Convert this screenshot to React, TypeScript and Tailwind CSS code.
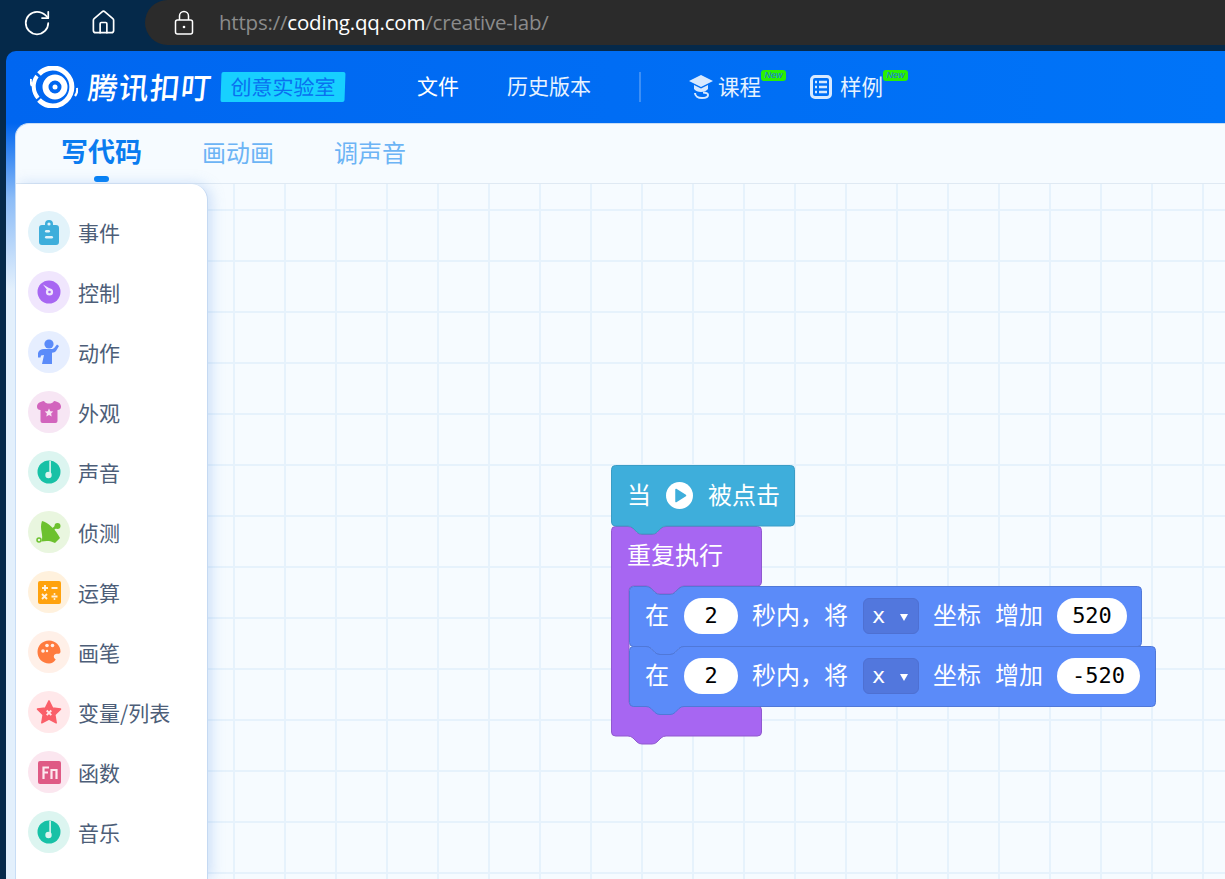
import React from "react";
import { RotateCw, Home } from "lucide-react";

const CJK = { fontFamily: '"Noto Sans CJK SC", sans-serif' } as const;

function topEdge(notch: boolean) {
  return notch ? "H17 q3 0 5 2 l4 4 q2 2 5 2 h10 q3 0 5 -2 l4 -4 q2 -2 5 -2" : "";
}
function bottomNotch(off: number) {
  // travelling right to left along a bottom edge
  return `H${off + 55} q-3 0 -5 2 l-4 4 q-2 2 -5 2 h-10 q-3 0 -5 -2 l-4 -4 q-2 -2 -5 -2`;
}
function stack(w: number, h: number, notch: boolean) {
  return `M4.5 .5 ${topEdge(notch)} H${w - 4.5} q4 0 4 4 V${h - 4.5} q0 4 -4 4 ${bottomNotch(0)} H4.5 q-4 0 -4 -4 V4.5 q0 -4 4 -4 Z`;
}

function BlockShape({ d, w, h, fill, stroke }: { d: string; w: number; h: number; fill: string; stroke: string }) {
  return (
    <svg width={w} height={h} className="absolute left-0 top-0 overflow-visible" viewBox={`0 0 ${w} ${h}`}>
      <path d={d} fill={fill} stroke={stroke} strokeWidth="1" />
    </svg>
  );
}

function Pill({ w, children }: { w: string; children: React.ReactNode }) {
  return (
    <span className={`${w} h-[36px] pb-[1px] rounded-[18px] bg-white flex items-center justify-center text-black text-[22px] font-['DejaVu_Sans_Mono',monospace]`}>
      {children}
    </span>
  );
}

function MoveRow({ w, value, pill, top }: { w: number; value: string; pill: string; top: number }) {
  return (
    <div className="absolute left-[18px]" style={{ top, width: w, height: 61 }}>
      <BlockShape d={stack(w, 61, true)} w={w} h={61} fill="#5b8bf9" stroke="#5078d8" />
      <div className="relative h-[60px] pl-[16px] flex items-center text-white text-[24px] leading-none">
        <span className="mr-[15px] pb-[4px]">在</span>
        <Pill w="w-[54px]">2</Pill>
        <span className="ml-[14px] mr-[15px] pb-[4px] whitespace-nowrap">秒内，将</span>
        <span className="w-[56px] h-[36px] pb-[1px] rounded-[6px] bg-[#5277dd] border border-[#4e70d2] flex items-center pl-[8px] gap-[14px] text-[22px] font-['DejaVu_Sans_Mono',monospace]">
          x
          <svg width="8" height="7" viewBox="0 0 8 7" className="mt-[3px] ml-[1px]"><path d="M0 0h8L4 7Z" fill="#fff" /></svg>
        </span>
        <span className="ml-[14px] pb-[4px] whitespace-nowrap">坐标</span>
        <span className="ml-[14px] mr-[14px] pb-[4px] whitespace-nowrap">增加</span>
        <Pill w={pill}>{value}</Pill>
      </div>
    </div>
  );
}

const icons: Record<string, React.ReactNode> = {
  event: (
    <svg width="20" height="26" viewBox="0 0 20 26">
      <path d="M6 6V5a4 4 0 0 1 8 0v1h3a3 3 0 0 1 3 3v14a3 3 0 0 1-3 3H3a3 3 0 0 1-3-3V9a3 3 0 0 1 3-3Z" fill="#3eaedb" />
      <circle cx="10" cy="5" r="1.6" fill="#e2f3fa" />
      <rect x="6" y="11" width="5" height="2.4" rx="1.2" fill="#e2f3fa" />
      <rect x="6" y="17" width="8" height="2.4" rx="1.2" fill="#e2f3fa" />
    </svg>
  ),
  control: (
    <svg width="24" height="24" viewBox="0 0 24 24">
      <circle cx="12" cy="12" r="11.5" fill="#a766f2" />
      <path d="M6 4.5l8.5 5-2.5 3Z" fill="#f0e6fd" />
      <circle cx="12.5" cy="12" r="3.6" fill="#f0e6fd" />
      <circle cx="12.5" cy="12" r="1.3" fill="#a766f2" />
    </svg>
  ),
  motion: (
    <svg width="24" height="26" viewBox="0 0 24 26">
      <circle cx="12" cy="5" r="4.6" fill="#5b8bf9" />
      <path d="M1 14c1-3 3-4 6-4h7c2 0 3-.5 4-2l2-2.500 2 1.500-3 5c-1 1.200-2 1.600-4 1.800L15 25H5l2-9-3 .5-.5 2H1Z" fill="#5b8bf9" />
    </svg>
  ),
  look: (
    <svg width="24" height="22" viewBox="0 0 24 22">
      <path d="M7 0c1 2 3 2.500 5 2.500S16 2 17 0c4 .5 7 2.500 7 5.500 0 2-1 3.500-3.500 3.500V20a2 2 0 0 1-2 2h-13a2 2 0 0 1-2-2V9C1 9 0 7.500 0 5.500 0 2.500 3 .5 7 0Z" fill="#d264bd" />
      <path d="M12 7.500l1.300 2.800 3 .3-2.200 2 .6 3-2.700-1.500-2.700 1.500.6-3-2.200-2 3-.3Z" fill="#f7e6f4" />
    </svg>
  ),
  sound: (
    <svg width="24" height="24" viewBox="0 0 24 24">
      <circle cx="12" cy="12" r="11.500" fill="#17c1a6" />
      <rect x="12.300" y="1" width="1.600" height="14" fill="#dcf5f0" />
      <circle cx="11.500" cy="15" r="3.200" fill="#dcf5f0" />
    </svg>
  ),
  sense: (
    <svg width="26" height="23" viewBox="0 0 26 23">
      <path d="M6 0C12 1 20 9 24 17L19 22C15 19.500 10 19.500 5.500 20.500 8 14 3 8 6 0Z" fill="#6cc12e" />
      <path d="M12 12 21 5" stroke="#6cc12e" strokeWidth="2.500" />
      <circle cx="21.500" cy="5" r="3" fill="#6cc12e" />
      <circle cx="3" cy="19" r="2" fill="none" stroke="#6cc12e" strokeWidth="1.500" />
    </svg>
  ),
  math: (
    <svg width="23" height="23" viewBox="0 0 23 23">
      <rect width="23" height="23" rx="2" fill="#ffa20d" />
      <path d="M4 7h6M7 4v6M13.500 7h6M4 13l5 5M9 13l-5 5M13.500 15.500h6" stroke="#fff1dd" strokeWidth="1.900" />
      <circle cx="16.500" cy="13" r="1" fill="#fff1dd" />
      <circle cx="16.500" cy="18" r="1" fill="#fff1dd" />
    </svg>
  ),
  pen: (
    <svg width="24" height="24" viewBox="0 0 24 24">
      <path d="M12 .5C18.500.5 23.500 5.500 23.500 11.500c0 1.500-1 2.300-2.500 2.300-2 0-4.200.5-4.200 2.700 0 1.300 1 2.200 2 3C16.800 22 15 23.500 12 23.500 5.500 23.500.5 18.500.5 12S5.500.5 12 .5Z" fill="#ff7b3e" />
      <circle cx="6" cy="11" r="1.800" fill="#fff0e8" />
      <circle cx="10" cy="5.500" r="1.800" fill="#fff0e8" />
      <circle cx="15.500" cy="5.500" r="1.800" fill="#fff0e8" />
      <circle cx="10" cy="11" r="1.200" fill="#fff0e8" />
    </svg>
  ),
  vars: (
    <svg width="26" height="24" viewBox="0 0 26 24">
      <path d="M13 .8 16.600 8 24.500 9.100 18.800 14.700 20.200 22.800 13 19 5.800 22.800 7.200 14.700 1.500 9.100 9.400 8Z" fill="#fa5f69" stroke="#fa5f69" strokeWidth="1.500" strokeLinejoin="round" />
      <path d="M10.700 10.500l4.600 4.600M15.300 10.500l-4.600 4.600" stroke="#ffe8ea" strokeWidth="1.900" />
    </svg>
  ),
  fn: (
    <svg width="23" height="23" viewBox="0 0 23 23">
      <rect width="23" height="23" rx="2" fill="#df5a85" />
      <path d="M5.500 18V6.500H11M5.500 11.500H10M13.500 18V9h5v9" fill="none" stroke="#fde8ef" strokeWidth="2.200" />
    </svg>
  ),
};

const items: [string, string, string][] = [
  ["事件", "bg-[#e2f3fa]", "event"],
  ["控制", "bg-[#f0e6fd]", "control"],
  ["动作", "bg-[#e6eeff]", "motion"],
  ["外观", "bg-[#f7e6f4]", "look"],
  ["声音", "bg-[#dcf5f0]", "sound"],
  ["侦测", "bg-[#e9f6df]", "sense"],
  ["运算", "bg-[#fff1dd]", "math"],
  ["画笔", "bg-[#fff0e8]", "pen"],
  ["变量/列表", "bg-[#ffe8ea]", "vars"],
  ["函数", "bg-[#fbe6ef]", "fn"],
  ["音乐", "bg-[#dcf5f0]", "sound"],
];

function NewBadge() {
  return (
    <span className="absolute left-full top-[0px] w-[25px] h-[11px] rounded-[3px] bg-[#2bf000] text-[#1a6ee8] text-[9px] leading-[11px] italic text-center font-['Liberation_Sans',sans-serif]">
      New
    </span>
  );
}

export default function App() {
  const cShape = `M4.5 .5 ${topEdge(true)} H146.500 q4 0 4 4 V56 q0 4 -4 4 ${bottomNotch(18)} H22 q-4 0 -4 4 V176 q0 4 4 4 H146.500 q4 0 4 4 V206 q0 4 -4 4 ${bottomNotch(0)} H4.500 q-4 0 -4 -4 V4.500 q0 -4 4 -4 Z`;
  const hat = `M4.500 .5 H179.500 q4 0 4 4 V57 q0 4 -4 4 ${bottomNotch(0)} H4.500 q-4 0 -4 -4 V4.500 q0 -4 4 -4 Z`;

  return (
    <div className="w-[1225px] h-[879px] overflow-hidden bg-[#05294a] flex flex-col" style={CJK}>
      {/* browser chrome */}
      <div className="h-[51px] shrink-0 flex items-start text-white">
        <div className="w-[145px] h-[45px] flex items-center pl-[22px] gap-[38px]">
          <RotateCw size={30} strokeWidth={1.4} />
          <Home size={27} strokeWidth={1.5} />
        </div>
        <div className="flex-1 h-[45px] bg-[#2b2b2b] rounded-l-[24px] flex items-center pl-[28px] gap-[24px]">
          <svg width="22" height="26" viewBox="0 0 22 26" fill="none" stroke="#fff" strokeWidth="1.500">
            <rect x="2.500" y="10" width="17" height="14" rx="2" />
            <path d="M6.500 10V6a4.500 4.500 0 0 1 9 0v4" />
            <circle cx="11" cy="17" r="1.300" fill="#fff" stroke="none" />
          </svg>
          <span className="text-[20.500px] text-[#8b8b8b] font-['Open_Sans',sans-serif] tracking-[-0.2px]">
            https://<span className="text-white">coding.qq.com</span>/creative-lab/
          </span>
        </div>
      </div>

      {/* page */}
      <div className="flex-1 min-h-0 ml-[6px] rounded-tl-[10px] overflow-hidden flex flex-col">
        <header className="h-[72px] shrink-0 bg-gradient-to-r from-[#0066f0] to-[#0074f8] flex items-center text-white">
          <svg width="48" height="42" viewBox="0 0 48 42" className="ml-[24px]">
            <path d="M9 8A19 19 0 1 1 9 34" fill="none" stroke="#fff" strokeWidth="5" />
            <path d="M7 10a18 18 0 0 0 1 22" fill="none" stroke="#fff" strokeWidth="4" />
            <circle cx="25" cy="21" r="9.500" fill="none" stroke="#fff" strokeWidth="6" />
            <circle cx="25" cy="21" r="2.500" fill="#fff" />
            <path d="M1 13q-1 3 1 7M47 22q1 4-2 8" fill="none" stroke="#fff" strokeWidth="2.200" />
          </svg>
          <span className="ml-[10px] w-[125px] pb-[2px] text-[30px] leading-none font-medium -skew-x-6 tracking-[1px] whitespace-nowrap">腾讯扣叮</span>
          <span className="ml-[8px] w-[124px] h-[30px] bg-[#17d0ff] rounded-[2px] -skew-x-2 text-[#0a6ff0] text-[21px] leading-[28px] text-center whitespace-nowrap">创意实验室</span>
          <span className="ml-[72px] pb-[2px] text-[21px]">文件</span>
          <span className="ml-[48px] pb-[2px] text-[21px] text-[#e6f2ff]">历史版本</span>
          <span className="ml-[48px] w-[2px] h-[30px] bg-[#3d8ff5]" />
          <svg width="24" height="26" viewBox="0 0 24 26" className="ml-[48px]" fill="#d7e9ff">
            <path d="M12 1 24 7l-12 6L0 7Z" />
            <path d="M5 11l7 3.500 7-3.500v4c-1.500 2-4 3-7 3s-5.500-1-7-3Z" />
            <path d="M6 19c0 3 3 5 7 5s6-1.500 6-3-2-2.500-5-2.500" fill="none" stroke="#d7e9ff" strokeWidth="2" />
          </svg>
          <span className="relative ml-[5px] pb-[2px] text-[21.500px] text-[#e6f2ff]">
            课程
            <NewBadge />
          </span>
          <svg width="22" height="24" viewBox="0 0 22 24" className="ml-[49px]">
            <rect x="1.500" y="1.500" width="19" height="21" rx="3.500" fill="none" stroke="#d7e9ff" strokeWidth="3" />
            <path d="M9 7h8M9 12h8M9 17h8M5 7h2M5 12h2M5 17h2" stroke="#d7e9ff" strokeWidth="2.500" />
          </svg>
          <span className="relative ml-[8px] pb-[2px] text-[21.500px] text-[#e6f2ff]">
            样例
            <NewBadge />
          </span>
        </header>

        <div className="flex-1 min-h-0 flex pl-[9px] bg-[linear-gradient(to_bottom,#0066f0_0%,#8cbcf7_10%,#e3f0fc_22%)]">
          <div className="flex-1 min-w-0 rounded-tl-[14px] overflow-hidden bg-[#f6fbff] border-l border-t border-[#c8ddf5] flex flex-col">
            <nav className="h-[60px] shrink-0 border-b border-[#dfe9f3] flex items-center relative">
              <span className="ml-[45px] w-[81px] pb-[4px] text-[27px] font-bold text-[#0a7cf0] whitespace-nowrap">写代码</span>
              <span className="ml-[60px] pb-[4px] text-[24px] text-[#6cb4f5]">画动画</span>
              <span className="ml-[60px] pb-[4px] text-[24px] text-[#6cb4f5]">调声音</span>
              <span className="absolute left-[78px] bottom-[1px] w-[15px] h-[6px] rounded-[3px] bg-[#007ef5]" />
            </nav>
            <div className="flex-1 min-h-0 flex">
              <aside className="w-[192px] shrink-0 bg-white rounded-tr-[16px] border-r border-[#c5d9f2] shadow-[3px_0_14px_rgba(120,170,235,0.35)] pt-[27px] pl-[12px] z-10">
                {items.map(([label, bg, icon]) => (
                  <div key={label} className="h-[60px] flex items-start">
                    <span className={`w-[42px] h-[42px] rounded-full ${bg} flex items-center justify-center`}>{icons[icon]}</span>
                    <span className="ml-[8px] h-[44px] flex items-center text-[21px] text-[#4d5e78] whitespace-nowrap">{label}</span>
                  </div>
                ))}
              </aside>
              <main className="relative flex-1 min-w-0 bg-[#f6fbff] bg-[linear-gradient(to_right,#e6f2fc_2px,transparent_2px),linear-gradient(to_bottom,#e6f2fc_2px,transparent_2px)] bg-[size:51px_51px] bg-[position:25px_25px]">
                {/* block stack: free canvas */}
                <div className="absolute left-[403px] top-[281px] w-[600px] h-[290px] text-white">
                  <div className="absolute left-0 top-[61px] w-[151px] h-[210px]">
                    <BlockShape d={cShape} w={151} h={210} fill="#a766f2" stroke="#9059cf" />
                    <div className="relative h-[60px] pl-[16px] pb-[4px] flex items-center text-[24px] leading-none whitespace-nowrap">重复执行</div>
                    <MoveRow top={60} w={513} value="520" pill="w-[70px]" />
                    <MoveRow top={120} w={527} value="-520" pill="w-[83px]" />
                  </div>
                  <div className="absolute left-0 top-0 w-[184px] h-[62px]">
                    <BlockShape d={hat} w={184} h={62} fill="#3eaedb" stroke="#3a9dc6" />
                    <div className="relative h-[61px] pl-[16px] flex items-center text-[24px] leading-none whitespace-nowrap">
                      <span className="pb-[4px]">当</span>
                      <svg width="27" height="27" viewBox="0 0 27 27" className="ml-[15px]">
                        <circle cx="13.500" cy="13.500" r="13.500" fill="#fff" />
                        <path d="M10 7.500 19.500 13.500 10 19.500Z" fill="#3eaedb" stroke="#3eaedb" strokeWidth="1.500" strokeLinejoin="round" />
                      </svg>
                      <span className="ml-[15px] pb-[4px]">被点击</span>
                    </div>
                  </div>
                </div>
              </main>
            </div>
          </div>
        </div>
      </div>
    </div>
  );
}
